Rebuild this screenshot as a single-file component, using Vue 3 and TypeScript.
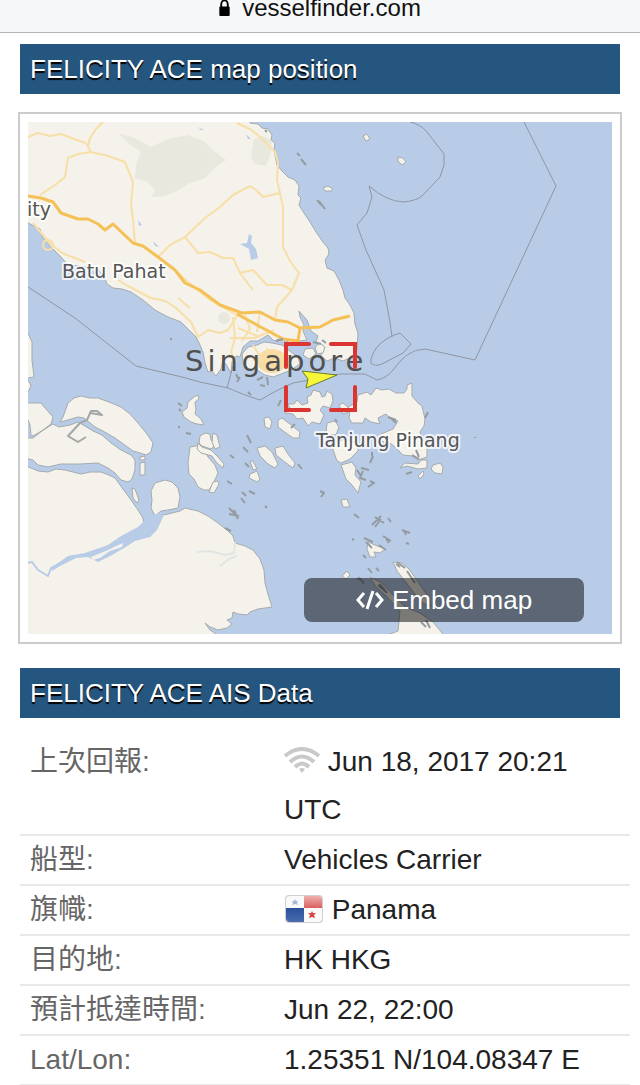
<script setup lang="ts">
interface Row {
  label: string
  value: string
  icon?: 'signal' | 'flag'
}

const rows: Row[] = [
  { label: '上次回報:', value: 'Jun 18, 2017 20:21 UTC', icon: 'signal' },
  { label: '船型:', value: 'Vehicles Carrier' },
  { label: '旗幟:', value: 'Panama', icon: 'flag' },
  { label: '目的地:', value: 'HK HKG' },
  { label: '預計抵達時間:', value: 'Jun 22, 22:00' },
  { label: 'Lat/Lon:', value: '1.25351 N/104.08347 E' },
]

// Outlines in map units; the viewBox places the visible window over them.
const land: string[] = [
  // Malay peninsula
  'M20 110H246L250 123L258 124L262 128L268 129L272 135L271 140L275 143L274 150L277 165L282 171L288 177L295 180L299 186L298 195L301 198L299 205L304 213L310 222L316 232L323 242L328 248L329 254L325 260L327 268L334 271L339 280L343 290L345 298L350 305L354 313L355 324L358 333L357 350L352 357L343 361L335 358L327 361L321 356L322 348L316 341L318 336L311 331L307 320L299 311L300 317L304 325L303 331L307 340L300 341L290 343L282 338L274 341L268 335L258 341L250 341L243 347L240 357L236 356L232 362L231 373L227 366L223 360L221 369L216 376L212 371L208 372L205 363L203 352L200 345L196 337L191 332L181 322L168 317L155 310L143 300L131 292L122 289L113 288L107 284L104 276L98 269L80 266L68 265L61 257L51 247L43 238L40 229L28 223L20 220Z',
  // Singapore
  'M242 354L248 347L257 345L264 342L272 343L282 345L291 352L298 357L300 364L291 370L281 374L273 377L265 375L257 370L248 369L243 362Z',
  'M305 349L313 348L316 354L309 359L303 355Z',
  'M315 347L320 343L325 347L323 353L317 354Z',
  'M20 332L28 333L32 342L32 360L34 377L28 378L20 377Z',
  'M20 380L29 381L31 386L28 392L20 392Z',
  'M20 403L41 403L46 409L53 417L51 424L43 430L35 435L31 436L30 425L28 420L20 418Z',
  'M63 417L68 403L74 398L81 396L90 398L98 398L109 402L121 407L130 414L138 423L147 434L153 443L151 452L146 455L140 453L133 451L115 438L103 431L95 427L84 418L78 417L68 420L60 422Z',
  'M20 438L33 438L42 431L53 424L59 427L70 425L78 422L85 426L93 431L102 435L111 443L121 450L131 455L135 460L135 470L132 479L128 482L121 480L115 473L108 468L98 463L80 464L61 464L48 467L38 465L33 460L20 457Z',
  'M20 464L31 468L38 471L48 472L56 469L65 470L81 474L90 472L101 472L109 475L115 478L123 489L131 500L138 510L143 518L144 525L154 521L158 516L168 514L180 511L185 508L198 511L208 516L218 523L227 530L233 536L235 543L245 546L253 550L260 559L264 570L265 583L268 594L272 607L258 609L250 612L247 615L238 614L233 612L232 618L227 620L232 624L227 628L218 630L210 627L205 623L210 630L216 634V642H20Z',
  'M155 483L165 480L172 482L178 488L180 497L178 508L168 510L161 511L155 516L151 508L152 500L151 491Z',
  'M140 463L145 462L145 475L140 475Z',
  'M140 457L145 456L145 460L140 460Z',
  'M132 488L135 489L139 500L137 503L133 498Z',
  'M194 397L198 395L199 399L195 402L196 410L195 414L201 419L204 425L197 424L191 422L184 417L182 412L187 408L188 402Z',
  'M190 447L200 445L205 450L208 457L215 465L218 473L214 482L209 490L204 490L198 487L194 479L189 474L188 463Z',
  'M213 482L218 481L219 484L214 493L209 492Z',
  'M200 436L205 433L210 434L211 440L217 444L211 449L202 446L199 443Z',
  'M213 433L217 435L220 447L215 449L212 442Z',
  'M198 443L202 447L211 450L218 457L224 464L223 468L216 462L212 456L201 453L197 449Z',
  'M264 418L269 417L272 422L270 429L265 427Z',
  'M278 420L282 418L290 424L300 432L299 438L293 438L286 433L278 427Z',
  'M285 413L290 409L288 404L294 404L297 400L302 405L308 403L307 397L311 395L313 390L320 392L322 397L325 396L327 391L332 394L333 401L330 408L323 406L320 410L324 415L320 424L312 422L308 426L303 418L297 419L293 414Z',
  'M348 407L357 402L358 395L367 392L371 395L376 388L382 390L389 389L396 393L404 393L407 389L407 385L412 383L412 396L418 403L422 406L425 419L424 426L420 432L423 440L427 447L427 457L418 460L412 456L403 455L395 447L390 443L381 441L381 434L393 429L398 421L391 419L386 414L378 418L380 424L371 422L365 418L363 423L352 423L349 418L350 411Z',
  'M339 405L343 403L348 407L348 412L343 414Z',
  'M327 423L335 421L339 427L336 435L326 434Z',
  'M331 444L345 439L358 444L358 451L350 459L341 463L337 461Z',
  'M341 465L352 462L356 468L355 475L361 482L358 493L352 485L346 479Z',
  'M257 448L265 446L272 452L278 464L275 468L268 464L260 456Z',
  'M275 448L283 446L288 454L295 463L293 468L286 463L276 455Z',
  'M250 474L257 471L260 479L257 482L249 478Z',
  'M250 461L253 461L257 469L253 470Z',
  'M433 465L440 463L443 467L442 474L435 473L431 469Z',
  'M418 476L423 471L424 474L420 479Z',
  'M400 468L405 463L418 464L421 460L427 460L427 468L418 469L407 466Z',
  'M341 500L347 499L350 507L343 507Z',
  'M368 542L375 545L385 549L380 553L374 552L376 557L370 557L367 549Z',
  'M342 576L347 571L350 575L346 579Z',
  'M393 562L402 563L409 569L418 582L427 595L431 606L422 603L411 589L404 580L397 571Z',
  'M370 577L382 583L395 597L405 607L420 613L433 622L443 634V642H388L390 634L398 631L400 611L386 596L376 587Z',
  'M363 136L367 134L370 139L366 141Z',
  'M398 157L403 158L406 162L402 165L398 161Z',
  'M323 188L328 186L333 189L331 191L325 191Z',
]

// Scattered islets too small to show more than their shoreline.
const islets =
  'M297 153l3 3M301 159l5 6M317 200l4 5m-2 -4l6 8M265 130l2 2M170 339h2M178 403l4 3m-3 3l2 2M178 427h2M186 433l5 1M230 455l4 3M227 481l5 3M243 447l5 5M245 463l4 4M247 435l4 8M242 492l4 4m3 -5l6 3M241 498l4 5M229 508l8 8m-8 -2l10 2m-5 -6l4 9M225 528l6 3M265 506l2 2M298 464l4 5M320 491l4 2l-3 4M354 514l5 4M368 487l6 -4l-4 -2M357 470l4 6m2 -5l-3 7l6 2M361 468l8 2M372 452v4M373 456l-3 7M335 419l2 3M428 412l-3 6M475 437v1M412 472l-6 2M375 517l9 6m-12 2l9 -9m-6 11l6 -8M388 518l3 4M352 539l2 1M364 538l9 4m-7 0l6 6M379 545l7 5M402 530l8 3m-6 -2l2 4M383 536l8 5m-6 -4l4 6M406 543l3 1M363 555l3 3M368 568l4 5m4 -5l3 3M357 578l7 4m-5 -5l5 7M378 585l8 7m-6 -8l7 9M421 622l5 5m0 -7l4 8M440 596l5 5M236 374l3 6M240 377l-3 5M257 380l6 -3m-3 8l5 1m2 -9l1 8M248 392l3 3M281 400l-3 6M295 424l-4 4M388 417l8 3m-4 -1l4 4M412 455l7 4m-3 -9l3 7M397 562l8 6m-9 -4l4 3m7 4l8 12M276 341l7 -2M305 345l6 -1m2 -2l8 2M322 340l4 3'

const borders: string[] = [
  'M28 287L75 318L136 366L182 377L200 382L228 388L245 395L260 400L276 391L293 383L315 379L340 374L365 374L377 380Q387 378 393 370Q400 360 407 355Q415 349 425 349L475 360L556 186L524 122',
  'M369 186L372 197L367 213L357 225L366 250L384 290L390 322L392 337',
  'M369 186Q386 201 403 202Q416 201 422 196L440 177L444 165V154L427 132Q420 124 410 122',
  'M411 344L400 333Q386 337 377 347Q370 357 371 363Q375 367 382 364L403 353Z',
  'M233 366L227 388',
]

const minorRoads: string[] = [
  'M28 137L38 133L50 136L61 134L74 139L86 143L91 152L108 156L125 162L133 182L131 205L133 220L135 243',
  'M103 122L96 129L90 138L88 146',
  'M91 152L78 154L68 158L65 177L55 185L40 195',
  'M158 257L170 245L185 237L205 218L220 207L233 195L250 186L256 190L263 197L280 193',
  'M185 237L198 253L210 252L223 258L233 258L240 273L253 270L267 285L282 285L292 290',
  'M240 273L253 290',
  'M237 123L250 129L260 137L275 152L278 163L277 180L283 207L283 247L290 261L299 273L292 290L277 307L275 320',
  'M33 223L43 235L50 243L62 253L85 262',
  'M118 280L128 286L151 298L165 301L175 307L191 322L198 337L208 330L220 333L228 330L237 316',
  'M175 270L188 282L210 300L237 315',
  'M178 298L190 308',
  'M233 317L235 338L231 352L236 362',
  'M230 338L254 338L274 330M238 328L260 337',
  'M245 315L250 329L242 341M260 312L257 332',
  'M253 345L262 360L275 368M253 360L284 355M267 348L268 371',
]

const majorRoads: string[] = [
  'M28 196L41 198L53 202L61 213L78 219L88 219L98 224L105 230L113 224L133 243L143 246L158 257L175 270L185 283L200 290L220 305L242 313L260 312L275 320L288 322L300 328L320 327L333 320L350 316',
  'M237 314L257 325L270 332L283 339L298 341L300 328',
]
</script>

<template>
  <div class="page">
    <header class="address-bar">
      <svg class="lock" viewBox="0 0 11 17" aria-hidden="true">
        <path d="M2 8V5a3 4 0 0 1 7 0V8" fill="none" stroke="#000" stroke-width="2" />
        <rect x="0" y="7" width="11" height="10" rx="1" />
      </svg>
      <span>vesselfinder.com</span>
    </header>

    <main>
      <section aria-labelledby="map-title">
        <h2 id="map-title" class="title">FELICITY ACE map position</h2>
        <div class="map-frame">
          <div class="map">
            <svg class="chart" viewBox="28 122 584 512" role="img" aria-label="FELICITY ACE map position">
              <g class="geo">
                <path v-for="d in land" :key="d" class="land" :d="d" />
                <path class="forest" d="M118 133L135 138L151 147L168 139L188 135L205 142L215 152L226 160L216 167L205 178L190 183L175 192L165 196L151 197L155 190L148 182L135 178L136 165L141 152L128 143Z" />
                <path class="forest" d="M254 139L263 136L272 141L271 153L266 166L255 164L251 157Z" />
                <circle class="forest" cx="224" cy="318" r="6" />
                <path class="lake" d="M249 234L252 236L251 243L256 249L258 258L251 260L249 249L240 244L247 243Z" />
                <path class="lake" d="M138 220l4 5l-3 1ZM153 241l6 6l-4 -1ZM170 258l4 4M246 134l5 5l-3 0ZM198 127l6 3l-3 0Z" />
                <path class="lake" d="M145 520L158 513L164 515L157 530L150 537L135 541L124 548L112 555L98 562L88 557L76 558L60 566L52 571L51 568L68 556L85 553L108 545L121 536L138 527Z" />
                <path class="river" d="M26 563L32 562L38 570L48 576L51 568L60 563" />
                <path class="land-plain" d="M91 557L108 550L116 546L123 543L122 547L110 551L100 558L93 560Z" />
                <path class="stream" d="M197 552L210 551L225 555L234 553L235 542M220 566L229 559L237 556" />
                <path class="creek" d="M90 413L102 415L97 411H91L87 420L80 423L68 436L78 442L86 437" />
                <ellipse class="city" cx="272" cy="361" rx="15" ry="12" />
                <path v-for="d in minorRoads" :key="d" class="road" :d="d" />
                <circle class="road" cx="48" cy="245" r="5" />
                <path v-for="d in majorRoads" :key="d" class="road major" :d="d" />
                <path v-for="d in borders" :key="d" class="border" :d="d" />
                <path class="islets" :d="islets" />
              </g>
              <g class="places">
                <text x="27" y="216">ity</text>
                <text x="62" y="278">Batu Pahat</text>
                <text x="316" y="447">Tanjung Pinang</text>
                <text class="country" x="185" y="371">Singapore</text>
              </g>
              <g class="marker">
                <path class="bracket" d="M309 344H286V367M331 344H355V367M309 410H286V387M331 410H355V387" />
                <path class="vessel" d="M302 371L337 375L306 388L308 379Z" />
              </g>
            </svg>
            <button type="button" class="embed">
              <svg class="code" viewBox="0 0 28 20" aria-hidden="true">
                <path d="M8 3L2 10L8 17M20 3L26 10L20 17M17 1L11 19" />
              </svg>
              <span>Embed map</span>
            </button>
          </div>
        </div>
      </section>

      <section aria-labelledby="data-title">
        <h2 id="data-title" class="title">FELICITY ACE AIS Data</h2>
        <table class="data">
          <tbody>
            <tr v-for="row in rows" :key="row.label">
              <th scope="row">{{ row.label }}</th>
              <td>
                <svg v-if="row.icon === 'signal'" class="signal" viewBox="0 0 36 26" aria-hidden="true">
                  <path d="M1 9Q18 -5 35 9M6 15Q18 4 30 15M11 20Q18 13 25 20" />
                  <path class="dot" d="M15 22Q18 20 21 22L18 26Z" />
                </svg>
                <svg v-if="row.icon === 'flag'" class="flag" viewBox="0 0 40 28" aria-hidden="true">
                  <defs>
                    <clipPath id="flag-clip"><rect x="2" y="1" width="36" height="26" rx="4" /></clipPath>
                    <linearGradient id="flag-red" x1="0" y1="0" x2="0" y2="1">
                      <stop offset="0" stop-color="#eeb0ae" />
                      <stop offset="1" stop-color="#d9605f" />
                    </linearGradient>
                    <linearGradient id="flag-blue" x1="0" y1="0" x2="0" y2="1">
                      <stop offset="0" stop-color="#2a519b" />
                      <stop offset="1" stop-color="#4a6cae" />
                    </linearGradient>
                  </defs>
                  <rect x="1" y="0" width="38" height="28" rx="4" fill="#d0d0d0" />
                  <g clip-path="url(#flag-clip)">
                    <rect x="2" y="1" width="36" height="26" fill="#fafafa" />
                    <rect x="20" y="1" width="18" height="12" fill="url(#flag-red)" />
                    <rect x="2" y="13" width="18" height="14" fill="url(#flag-blue)" />
                    <path fill="#a9b8d8" d="M11 4l1 2h2l-1 2l1 2l-3 -1l-3 1l1 -2l-1 -2h2Z" />
                    <path fill="#d84745" d="M28 16l1 2h3l-2 2l1 3l-3 -1l-3 1l1 -3l-2 -2h3Z" />
                  </g>
                </svg>
                {{ row.value }}
              </td>
            </tr>
          </tbody>
        </table>
      </section>
    </main>
  </div>
</template>

<style>
body {
  margin: 0;
  background: #fff;
}
</style>

<style scoped>
.page {
  font-family: "Liberation Sans", "Noto Sans CJK TC", sans-serif;
  font-size: 28px;
  color: #222;
}

.address-bar {
  box-sizing: border-box;
  height: 33px;
  display: flex;
  justify-content: center;
  gap: 12px;
  border-bottom: 1px solid #b2b3b5;
  background: #f6f7f9;
  color: #111;
  font-size: 24px;
  line-height: 16px;
}

.lock {
  width: 11px;
  height: 16px;
}

.title {
  margin: 11px 20px 18px;
  padding: 0 10px;
  background: #25567f;
  color: #fff;
  font-size: 26px;
  font-weight: 400;
  line-height: 50px;
  text-shadow: 0 2px 1px #000;
}

.map-frame {
  margin: 0 18px 24px;
  padding: 8px;
  border: 2px solid #ccc;
}

.map {
  position: relative;
  background: #b8cce8;
}

.chart {
  display: block;
  width: 100%;
  overflow: hidden;
}

.geo {
  filter: blur(0.7px);
  stroke-linejoin: round;
}

.land {
  fill: #f4f2ea;
  stroke: #a4aaac;
  stroke-width: 1;
}

.land-plain {
  fill: #f4f2ea;
}

.forest {
  fill: #e8e8de;
}

.lake {
  fill: #b8cce8;
}

.river {
  fill: none;
  stroke: #b8cce8;
  stroke-width: 2;
}

.stream {
  fill: none;
  stroke: #e0e5e6;
  stroke-width: 2;
}

.creek {
  fill: none;
  stroke: #a3a7a8;
  stroke-width: 2;
}

.city {
  fill: #f8dca4;
}

.road {
  fill: none;
  stroke: #f7dfa7;
  stroke-width: 2;
}

.major {
  stroke: #f5c056;
  stroke-width: 3;
}

.border {
  fill: none;
  stroke: #8f96a0;
  stroke-width: 1;
}

.islets {
  fill: none;
  stroke: #959ca1;
  stroke-width: 2;
}

.places {
  fill: #555;
  font-family: "DejaVu Sans", sans-serif;
  font-size: 19px;
  paint-order: stroke;
  stroke: rgba(255, 255, 255, 0.8);
  stroke-width: 4;
  stroke-linejoin: round;
}

.places .country {
  fill: #505050;
  font-size: 29px;
  letter-spacing: 4px;
  stroke: none;
}

.bracket {
  fill: none;
  stroke: #dc3431;
  stroke-width: 4;
  stroke-linecap: round;
}

.vessel {
  fill: #f7f73a;
  stroke: #6c7a22;
  stroke-width: 1;
}

.embed {
  position: absolute;
  right: 28px;
  bottom: 12px;
  display: flex;
  align-items: center;
  justify-content: center;
  gap: 8px;
  width: 280px;
  height: 44px;
  padding: 0;
  border: 0;
  border-radius: 8px;
  background: rgba(0, 0, 0, 0.5);
  color: #fff;
  font: inherit;
  font-size: 26px;
}

.code {
  width: 28px;
  height: 20px;
  fill: none;
  stroke: #fff;
  stroke-width: 3;
}

.data {
  width: calc(100% - 30px);
  margin: 20px 10px 0 20px;
  border-spacing: 0;
  line-height: 48px;
}

.data th,
.data td {
  padding: 0 10px 0 0;
  border-bottom: 2px solid #e9e9e9;
  text-align: left;
  vertical-align: top;
}

.data th {
  width: 244px;
  padding-left: 10px;
  color: #666;
  font-weight: 400;
}

.signal {
  width: 36px;
  height: 26px;
  vertical-align: -2px;
  fill: none;
  stroke: #c9c9c9;
  stroke-width: 4;
}

.signal .dot {
  fill: #c9c9c9;
  stroke: none;
}

.flag {
  width: 40px;
  height: 28px;
  vertical-align: -4px;
}
</style>
